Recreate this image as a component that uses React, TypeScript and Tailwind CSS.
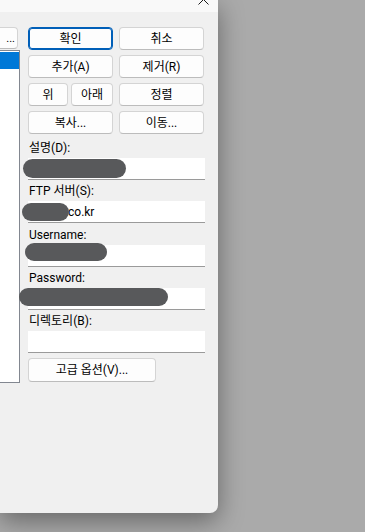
import React from "react";

const font = { fontFamily: 'Roboto, "Noto Sans CJK KR", sans-serif' };

function Btn({ children, primary, className = "" }: { children: React.ReactNode; primary?: boolean; className?: string }) {
  return (
    <div
      className={`h-[23px] flex items-center justify-center rounded-[4px] text-[12px] text-black bg-[#fdfdfd] ${
        primary ? "border border-[#005fb8] shadow-[inset_0_0_0_1px_#005fb8]" : "border border-[#d4d4d4] border-b-[#bcbcbc]"
      } ${className}`}
    >
      {children}
    </div>
  );
}

function Label({ children }: { children: React.ReactNode }) {
  return <div className="h-[21px] flex items-center pl-[1px] text-[12px] text-black leading-none">{children}</div>;
}

function Field({ children }: { children?: React.ReactNode }) {
  return (
    <div className="relative h-[22px] bg-white border-b border-[#9a9a9a] flex items-center text-[12px] text-black">
      {children}
    </div>
  );
}

function Blob({ className }: { className: string }) {
  return <div className={`absolute rounded-full bg-[#58595b] ${className}`} />;
}

export default function App() {
  return (
    <div className="relative w-[365px] h-[532px] bg-[#aaaaaa] overflow-hidden" style={font}>
      <div className="relative w-[218px] h-[513px] bg-[#f0f0f0] rounded-br-[8px] shadow-[0_8px_26px_rgba(0,0,0,0.4)] flex flex-col">
        <div className="relative h-[12px] bg-[#f9f9f9]">
          <svg className="absolute left-[198px] top-[-6px]" width="11" height="11" viewBox="0 0 11 11">
            <path d="M0.5 0.5 L10.5 10.5 M10.5 0.5 L0.5 10.5" stroke="#1b1b1b" strokeWidth="1" fill="none" />
          </svg>
        </div>
        <div className="flex flex-1">
          <div className="w-[20px] flex flex-col pt-[15px]">
            <div className="h-[22px] w-[18px] bg-[#fdfdfd] border border-l-0 border-[#d4d4d4] border-b-[#bcbcbc] rounded-r-[4px] flex items-center justify-end pr-[2px] text-[11px] leading-none text-black">
              ...
            </div>
            <div className="mt-[1px] h-[333px] w-[20px] bg-white border border-l-0 border-[#828790] pt-[1px]">
              <div className="h-[17px] w-full bg-[#0078d7]" />
            </div>
          </div>
          <div className="ml-[8px] w-[177px] flex flex-col pt-[15px]">
            <div className="grid grid-cols-[85px_85px] gap-x-[6px] gap-y-[5px]">
              <Btn primary>확인</Btn>
              <Btn>취소</Btn>
              <Btn>추가(A)</Btn>
              <Btn>제거(R)</Btn>
              <div className="flex gap-[3px]">
                <Btn className="w-[40px]">위</Btn>
                <Btn className="flex-1">아래</Btn>
              </div>
              <Btn>정렬</Btn>
              <Btn>복사...</Btn>
              <Btn>이동...</Btn>
            </div>
            <div className="mt-[3px]">
              <Label>설명(D):</Label>
              <Field>
                <Blob className="left-[-5px] top-[1px] w-[103px] h-[19px]" />
              </Field>
              <Label>FTP 서버(S):</Label>
              <Field>
                <span className="pl-[40px]">co.kr</span>
                <Blob className="left-[-6px] top-[2px] w-[47px] h-[18px]" />
              </Field>
              <div className="h-px" />
              <Label>Username:</Label>
              <Field>
                <Blob className="left-[-3px] top-[-2px] w-[82px] h-[18px]" />
              </Field>
              <Label>Password:</Label>
              <Field>
                <Blob className="left-[-9px] top-[0px] w-[149px] h-[18px]" />
              </Field>
              <Label>디렉토리(B):</Label>
              <Field />
              <div className="mt-[5px] w-[128px]">
                <Btn className="h-[24px]">고급 옵션(V)...</Btn>
              </div>
            </div>
          </div>
        </div>
      </div>
    </div>
  );
}
